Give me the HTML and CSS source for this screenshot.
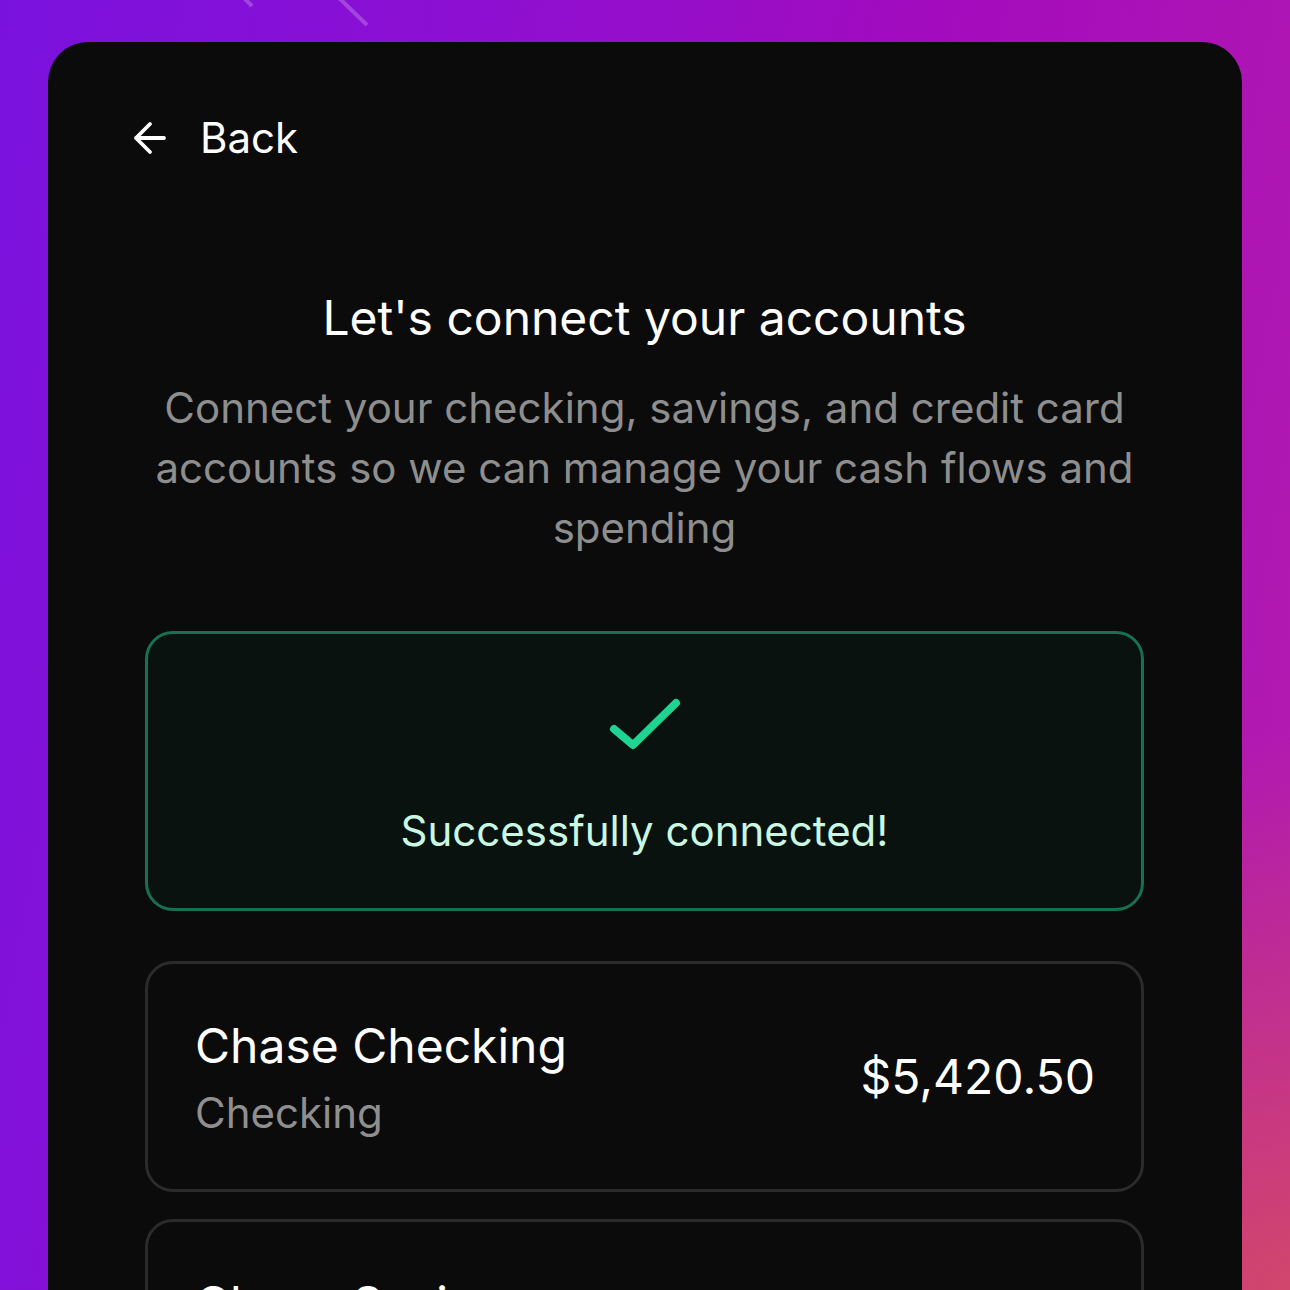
FILE: index.html
```html
<!DOCTYPE html>
<html lang="en">
<head>
<meta charset="utf-8">
<title>Connect accounts</title>
<link rel="stylesheet" href="styles.css">
</head>
<body>
  <svg class="backdrop-lines" width="420" height="40" viewBox="0 0 420 40" aria-hidden="true">
    <line x1="243" y1="-3" x2="252" y2="6" />
    <line x1="338" y1="-3" x2="367" y2="25" />
  </svg>

  <main class="panel">
    <header class="top-bar">
      <button class="back-btn" type="button">
        <svg class="back-icon" width="34" height="34" viewBox="0 0 34 34" aria-hidden="true">
          <path d="M31 17H3M17 3L3 17l14 14" />
        </svg>
        <span>Back</span>
      </button>
    </header>

    <section class="intro">
      <h1 class="title">Let's connect your accounts</h1>
      <p class="lead">Connect your checking, savings, and credit card accounts so we can manage your cash flows and spending</p>
    </section>

    <div class="status-box">
      <svg class="status-check" width="80" height="58" viewBox="0 0 80 58" aria-hidden="true">
        <path d="M9 32L28 48L71 6" />
      </svg>
      <p class="status-text">Successfully connected!</p>
    </div>

    <ul class="account-list">
      <li class="account">
        <div class="account-info">
          <span class="account-name">Chase Checking</span>
          <span class="account-type">Checking</span>
        </div>
        <span class="account-balance">$5,420.50</span>
      </li>
      <li class="account">
        <div class="account-info">
          <span class="account-name">Chase Savings</span>
          <span class="account-type">Savings</span>
        </div>
        <span class="account-balance">$12,850.00</span>
      </li>
    </ul>
  </main>
</body>
</html>
```

FILE: styles.css
```css
* {
  box-sizing: border-box;
}

html,
body {
  height: 100%;
}

body {
  margin: 0;
  overflow: hidden;
  position: relative;
  font-family: Inter, "Noto Sans", "Liberation Sans", sans-serif;
  background:
    radial-gradient(ellipse 900px 800px at 100% 100%, rgba(214, 78, 96, 0.85), rgba(214, 78, 96, 0) 70%),
    linear-gradient(100deg, #7a12de 0%, #8c0fd2 30%, #a50cbc 65%, #b41cae 100%);
  padding: 42px 48px 0;
}

.backdrop-lines {
  position: absolute;
  top: 0;
  left: 0;
}

.backdrop-lines line {
  stroke: rgba(255, 255, 255, 0.22);
  stroke-width: 4;
}

.panel {
  background: #0b0b0b;
  border-radius: 40px;
  min-height: 1400px;
  padding: 72px 98px 0 97px;
  display: flex;
  flex-direction: column;
}

/* header */
.top-bar {
  display: flex;
  margin-left: -12px;
}

.back-btn {
  display: flex;
  align-items: center;
  gap: 33px;
  background: none;
  border: 0;
  padding: 0;
  color: #ffffff;
  font: inherit;
  font-size: 42px;
  line-height: 48px;
  cursor: pointer;
}

.back-icon {
  fill: none;
  stroke: #ffffff;
  stroke-width: 3.8;
  stroke-linecap: round;
  stroke-linejoin: round;
}

/* intro copy */
.intro {
  text-align: center;
  margin-top: 128px;
}

.title {
  margin: 0;
  font-size: 48px;
  line-height: 56px;
  font-weight: 400;
  color: #ffffff;
}

.lead {
  margin: 32px 0 0;
  font-size: 42px;
  line-height: 60px;
  color: #8e8e8e;
}

/* success message */
.status-box {
  margin-top: 73px;
  height: 280px;
  border: 3px solid #17704f;
  border-radius: 28px;
  background: #0a1210;
  display: flex;
  flex-direction: column;
  align-items: center;
  padding-top: 63px;
}

.status-check {
  fill: none;
  stroke: #1fd493;
  stroke-width: 8;
  stroke-linecap: round;
  stroke-linejoin: round;
}

.status-text {
  margin: 51px 0 0;
  font-size: 42px;
  line-height: 50px;
  color: #c9f7e1;
}

/* account list */
.account-list {
  list-style: none;
  margin: 50px 0 0;
  padding: 0;
  display: flex;
  flex-direction: column;
  gap: 27px;
}

.account {
  height: 231px;
  border: 3px solid #2b2b2b;
  border-radius: 28px;
  padding: 54px 46px 0 47px;
  display: flex;
  justify-content: space-between;
  align-items: flex-start;
}

.account-info {
  display: flex;
  flex-direction: column;
  gap: 14px;
}

.account-name {
  font-size: 48px;
  line-height: 56px;
  color: #ffffff;
}

.account-type {
  font-size: 42px;
  line-height: 50px;
  color: #8f8f8f;
}

.account-balance {
  align-self: center;
  margin-top: -54px;
  font-size: 48px;
  line-height: 56px;
  color: #ffffff;
}
```
